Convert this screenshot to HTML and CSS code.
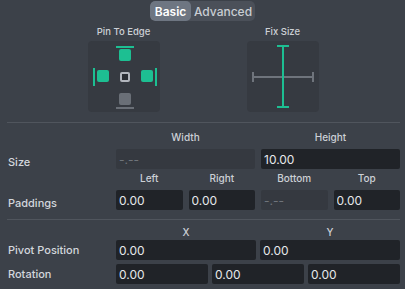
FILE: index.html
```html
<!DOCTYPE html>
<html lang="en">
<head>
  <meta charset="UTF-8" />
  <meta name="viewport" content="width=device-width, initial-scale=1.0"/>
  <title>Layout Inspector</title>
  <link rel="stylesheet" href="styles.css">
</head>
<body>
  <div class="panel">
    <div class="tabs">
      <button class="tab active">Basic</button>
      <button class="tab">Advanced</button>
    </div>

    <div class="pickers">
      <div class="picker">
        <div class="picker-title">Pin To Edge</div>
        <div class="pad">
          <svg width="72" height="71" viewBox="0 0 72 71">
            <rect x="28" y="5" width="18" height="2" fill="#1dbf92"/>
            <rect x="31" y="8" width="12" height="12" rx="2" fill="#1dbf92"/>
            <rect x="5" y="27" width="2" height="18" fill="#1dbf92"/>
            <rect x="9" y="29" width="12" height="12" rx="2" fill="#1dbf92"/>
            <rect x="33" y="32" width="8" height="8" rx="1" fill="#2a2e34" stroke="#b2b6bd" stroke-width="2"/>
            <rect x="53" y="29" width="12" height="12" rx="2" fill="#1dbf92"/>
            <rect x="67" y="27" width="2" height="18" fill="#1dbf92"/>
            <rect x="31" y="52" width="12" height="12" rx="2" fill="#6a6f77"/>
            <rect x="28" y="66" width="18" height="2" fill="#6a6f77"/>
          </svg>
        </div>
      </div>
      <div class="picker">
        <div class="picker-title">Fix Size</div>
        <div class="pad">
          <svg width="72" height="71" viewBox="0 0 72 71">
            <rect x="5" y="35" width="62" height="2" fill="#6f747c"/>
            <rect x="5" y="31" width="2" height="10" fill="#6f747c"/>
            <rect x="65" y="31" width="2" height="10" fill="#6f747c"/>
            <rect x="35" y="4" width="2" height="63" fill="#1dbf92"/>
            <rect x="30" y="4" width="12" height="2" fill="#1dbf92"/>
            <rect x="30" y="65" width="12" height="2" fill="#1dbf92"/>
          </svg>
        </div>
      </div>
    </div>

    <div class="sep"></div>

    <div class="group">
      <div class="heads cols-2"><span></span><span>Width</span><span>Height</span></div>
      <div class="row cols-2">
        <label class="name low">Size</label>
        <input class="num" placeholder="-.--" disabled>
        <input class="num" value="10.00">
      </div>

      <div class="heads cols-4 tight"><span></span><span>Left</span><span>Right</span><span>Bottom</span><span>Top</span></div>
      <div class="row cols-4">
        <label class="name low">Paddings</label>
        <input class="num" value="0.00">
        <input class="num" value="0.00">
        <input class="num" placeholder="-.--" disabled>
        <input class="num" value="0.00">
      </div>
    </div>

    <div class="sep sep-2"></div>

    <div class="group">
      <div class="heads pivot"><span></span><span>X</span><span>Y</span></div>
      <div class="row pivot">
        <label class="name">Pivot Position</label>
        <input class="num" value="0.00">
        <input class="num" value="0.00">
      </div>
      <div class="row rotation">
        <label class="name">Rotation</label>
        <input class="num" value="0.00">
        <input class="num" value="0.00">
        <input class="num" value="0.00">
      </div>
    </div>
  </div>
</body>
</html>
```

FILE: styles.css
```css
body {
  margin: 0;
  background-color: #3c4149;
  font-family: Inter, "Liberation Sans", sans-serif;
  color: #d3d7dd;
}

.panel {
  width: 405px;
  height: 289px;
  overflow: hidden;
}

.tabs {
  display: flex;
  width: 105px;
  height: 20px;
  margin: 1px auto 0;
  background-color: #4b5059;
  border-radius: 5px;
  overflow: hidden;
}

.tab {
  border: none;
  background: none;
  padding: 0;
  height: 20px;
  font-family: inherit;
  font-size: 12px;
  font-weight: 500;
  color: #c9cdd3;
}

.tab:first-child {
  width: 41px;
}

.tab:last-child {
  flex: 1;
}

.tab.active {
  background-color: #6e7682;
  color: #ffffff;
  font-weight: 600;
  border-radius: 5px;
}

.pickers {
  display: flex;
  justify-content: center;
  gap: 87px;
  margin-top: 4px;
  padding-left: 1px;
}

.picker {
  display: flex;
  flex-direction: column;
  align-items: center;
}

.picker-title {
  height: 14px;
  line-height: 14px;
  font-size: 9.5px;
  font-weight: 500;
  color: #ccd0d6;
  margin-bottom: 2px;
}

.pad {
  width: 72px;
  height: 71px;
  background-color: #363a41;
  border-radius: 4px;
}

.pad svg {
  display: block;
}

.sep {
  height: 1px;
  margin: 10px 5px 0 7px;
  background-color: #50555d;
}

.sep-2 {
  margin-top: 9px;
}

.group {
  padding: 0 5px 0 8px;
}

.heads,
.row {
  display: grid;
  column-gap: 6px;
  align-items: center;
}

.cols-2 {
  grid-template-columns: 102px 1fr 1fr;
}

.cols-4 {
  grid-template-columns: 102px 1fr 1fr 1fr 1fr;
}

.pivot {
  grid-template-columns: 104px 1fr 1fr;
  column-gap: 4px;
}

.rotation {
  grid-template-columns: 104px 1fr 1fr 1fr;
  column-gap: 4px;
  margin-top: 4px;
}

.heads {
  height: 14px;
  margin-top: 7px;
  margin-bottom: 5px;
}

.heads.tight {
  margin-top: 2px;
}

.heads.pivot {
  margin-top: 5px;
  margin-bottom: 1px;
}

.heads span {
  text-align: center;
  font-size: 10px;
  font-weight: 500;
  line-height: 14px;
  color: #ccd0d6;
}

.name {
  font-size: 11px;
  font-weight: 500;
  color: #d3d7dd;
}

.name.low {
  padding-top: 6px;
}

.num {
  display: block;
  width: 100%;
  min-width: 0;
  height: 20px;
  box-sizing: border-box;
  border: none;
  border-radius: 2px;
  padding: 0 3px;
  margin: 0;
  background-color: #202328;
  font-family: inherit;
  font-size: 12px;
  color: #e6e8eb;
  outline: none;
}

.num:disabled {
  background-color: #353940;
}

.num::placeholder {
  color: #6f747b;
}
```
